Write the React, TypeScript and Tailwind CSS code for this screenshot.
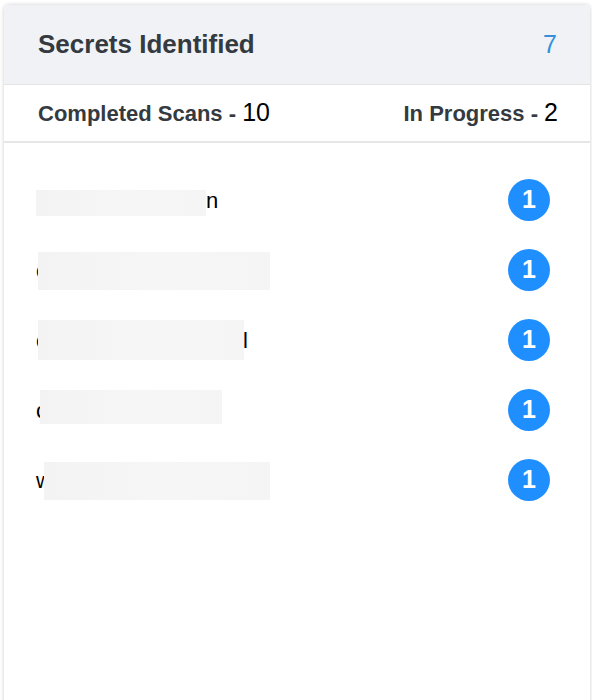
import React from 'react';

type Row = { left?: string; right?: string; rightShift?: number; box: [number, number, number, number] };

// box: [offsetLeft, width, top offset from row center, height]
const ROWS: Row[] = [
  { right: 'n', box: [0, 170, -10, 26] },
  { left: 'c', box: [2, 232, -18, 38] },
  { left: 'c', right: 'l', rightShift: -1, box: [2, 206, -20, 40] },
  { left: 'c', box: [4, 182, -20, 34] },
  { left: 'w', box: [8, 226, -18, 38] },
];

const App: React.FC = () => {
  return (
    <div className="min-h-screen bg-white pt-[5px] pl-[4px] pr-[2px]" style={{ fontFamily: '"Liberation Sans", Arial, sans-serif' }}>
      <div className="min-h-[720px] rounded-t-[5px] bg-white shadow-[0_0_4px_rgba(0,0,0,0.2)]">
        {/* header */}
        <div className="h-[80px] flex items-center justify-between pl-[34px] pr-[33px] bg-[#f0f2f6] rounded-t-[5px] border-b border-[#e4e4e4]">
          <span className="text-[26px] font-bold text-[#343a40]">Secrets Identified</span>
          <span className="text-[25px] text-[#3391db]">7</span>
        </div>

        {/* stats */}
        <div className="h-[58px] flex items-center justify-between pl-[34px] pr-[32px] border-b-2 border-[#e6e6e6]">
          <span className="flex items-baseline">
            <span className="text-[22px] font-bold text-[#343a40]">Completed Scans -&nbsp;</span>
            <span className="text-[25px] text-black">10</span>
          </span>
          <span className="flex items-baseline">
            <span className="text-[22px] font-bold text-[#343a40]">In Progress -&nbsp;</span>
            <span className="text-[25px] text-black">2</span>
          </span>
        </div>

        {/* list */}
        <div className="pt-[22px] pl-[32px] pr-[40px]">
          {ROWS.map((r, i) => (
            <div key={i} className="h-[70px] flex items-center justify-between">
              <div className="relative h-full flex items-center text-[22px] text-black">
                <span className="inline-block" style={{ width: r.box[0] + r.box[1] }}>{r.left ?? ''}</span>
                {r.right && <span style={{ marginLeft: r.rightShift ?? 0 }}>{r.right}</span>}
                <span
                  className="absolute bg-gradient-to-r from-[#f3f3f3] via-[#f6f6f6] to-[#f5f5f5]"
                  style={{ left: r.box[0], width: r.box[1], top: 35 + r.box[2], height: r.box[3] }}
                />
              </div>
              <div className="w-[42px] h-[42px] rounded-full bg-[#1f8fff] flex items-center justify-center text-white text-[25px] font-bold">1</div>
            </div>
          ))}
        </div>
      </div>
    </div>
  );
};

export default App;
